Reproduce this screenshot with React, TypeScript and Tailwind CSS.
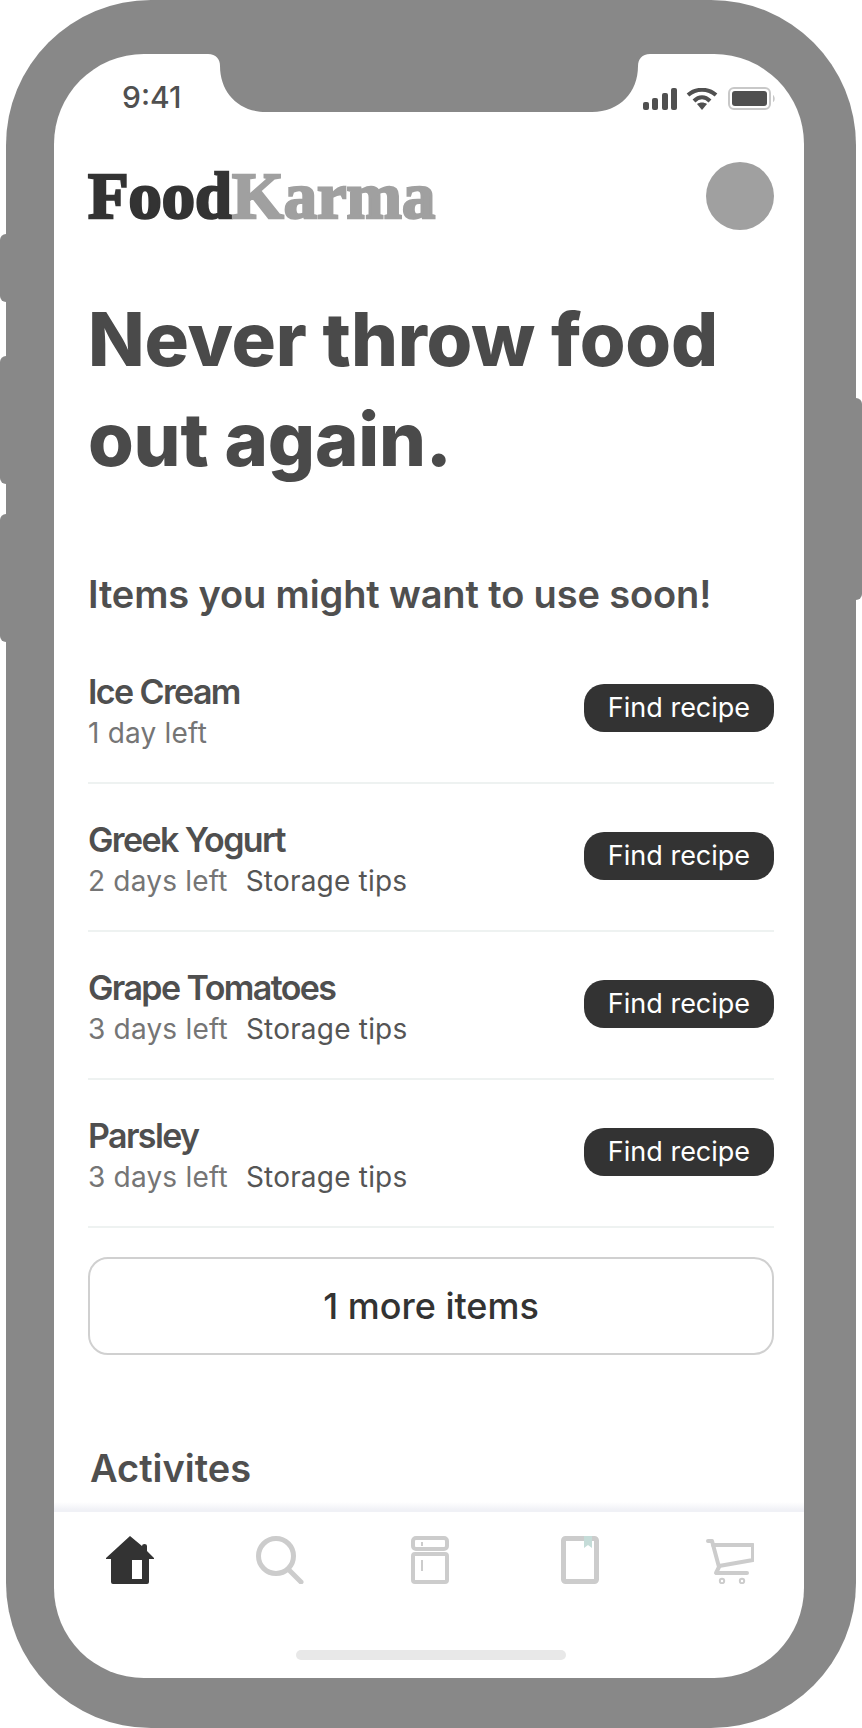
const items = [
  { name: 'Ice Cream', left: '1 day left', tips: false },
  { name: 'Greek Yogurt', left: '2 days left', tips: true },
  { name: 'Grape Tomatoes', left: '3 days left', tips: true },
  { name: 'Parsley', left: '3 days left', tips: true },
];

function Notch() {
  return (
    <svg className="absolute left-[154px] top-0" width="442" height="58" viewBox="0 0 442 58">
      <path d="M0 0 C8 0 12 5 12 12 C12 38 30 58 58 58 H384 C412 58 430 38 430 12 C430 5 434 0 442 0 Z" fill="#888888" />
    </svg>
  );
}

function SignalIcons() {
  return (
    <div className="absolute right-[27px] top-[33px] flex items-center">
      <svg width="36" height="22" viewBox="0 0 36 22" fill="#505050">
        <rect x="1" y="14" width="6" height="8" rx="2" />
        <rect x="10" y="10" width="6" height="12" rx="2" />
        <rect x="20" y="5" width="6" height="17" rx="2" />
        <rect x="29" y="0" width="6" height="22" rx="2" />
      </svg>
      <svg className="ml-[8px]" width="32" height="22" viewBox="0 0 32 22" fill="none">
        <path d="M2 7 C10 0 22 0 30 7" stroke="#505050" strokeWidth="4" />
        <path d="M8 13 C13 8 19 8 24 13" stroke="#505050" strokeWidth="4" />
        <path d="M11 16 L16 22 L21 16 C18 14 14 14 11 16 Z" fill="#505050" />
      </svg>
      <svg className="ml-[10px]" width="49" height="23" viewBox="0 0 49 23" fill="none">
        <rect x="1" y="1" width="41" height="21" rx="5" stroke="#c8c8c8" strokeWidth="2" />
        <rect x="4" y="4" width="35" height="15" rx="3" fill="#505050" />
        <path d="M45 8 C47 9 47.500 14 45 15 Z" fill="#c8c8c8" />
      </svg>
    </div>
  );
}

function HomeIcon() {
  return (
    <svg className="-ml-[2px]" width="48" height="48" viewBox="0 0 48 48">
      <path d="M24 0 L36 10 V10 Q36 8 38.500 8 Q41 8 41 10 V15 L48 22 V23 H43 V46 Q43 48 41 48 H7 Q5 48 5 46 V23 H0 V22 Z" fill="#333333" />
      <rect x="26" y="24" width="10" height="19" fill="#ffffff" />
    </svg>
  );
}

function SearchIcon() {
  return (
    <svg width="48" height="48" viewBox="0 0 48 48" fill="none" stroke="#cccccc" strokeWidth="5" strokeLinecap="round">
      <circle cx="20" cy="20" r="17.500" />
      <path d="M33 34 L45 46" />
    </svg>
  );
}

function FridgeIcon() {
  return (
    <svg width="38" height="48" viewBox="0 0 38 48" fill="none" stroke="#cccccc" strokeWidth="4">
      <rect x="2" y="2" width="34" height="11" rx="3" />
      <path d="M2 20 Q2 18 4 18 H34 Q36 18 36 20 V44 Q36 46 34 46 H4 Q2 46 2 44 Z" />
      <path d="M11 6 V10 M11 24 V35" strokeWidth="2" />
    </svg>
  );
}

function BookIcon() {
  return (
    <svg width="38" height="48" viewBox="0 0 38 48" fill="none">
      <rect x="2.500" y="2.500" width="33" height="43" rx="2" stroke="#cccccc" strokeWidth="5" />
      <path d="M23 0 H31 V12 L27 9 L23 12 Z" fill="#c5dcd8" />
    </svg>
  );
}

function CartIcon() {
  return (
    <svg className="ml-[2px]" width="48" height="48" viewBox="0 0 48 48" fill="none" stroke="#cccccc" strokeLinecap="round" strokeLinejoin="round">
      <path d="M2 5 H6 L13 31 L10 37 H41" strokeWidth="4" />
      <path d="M7 9 H47 V24 L13 30" strokeWidth="4" />
      <circle cx="16" cy="45" r="2.200" strokeWidth="2" />
      <circle cx="36" cy="45" r="2.200" strokeWidth="2" />
    </svg>
  );
}

export default function App() {
  return (
    <div className="w-[862px] h-[1728px] bg-white font-['Inter',sans-serif]">
      <div className="relative mx-[6px] w-[850px] h-[1728px] rounded-[145px] bg-[#888888] pl-[48px] pr-[52px] pt-[54px] pb-[50px]">
        {/* side buttons */}
        <div className="absolute -left-[6px] top-[234px] w-[12px] h-[68px] rounded-l-[6px] bg-[#888888]" />
        <div className="absolute -left-[6px] top-[356px] w-[12px] h-[128px] rounded-l-[6px] bg-[#888888]" />
        <div className="absolute -left-[6px] top-[514px] w-[12px] h-[128px] rounded-l-[6px] bg-[#888888]" />
        <div className="absolute -right-[6px] top-[398px] w-[12px] h-[202px] rounded-r-[6px] bg-[#888888]" />

        <div className="relative flex flex-col h-full rounded-[90px] bg-white overflow-hidden">
          <Notch />
          <div className="absolute left-[68px] top-[23px] text-[30px] leading-[40px] font-medium text-[#505050]">9:41</div>
          <SignalIcons />

          <main className="flex-1 overflow-hidden pr-[30px] pl-[34px] pt-[108px]">
            <div className="flex items-center justify-between">
              <div className="font-['Liberation_Serif',serif] text-[66.500px] leading-[68px] font-bold [-webkit-text-stroke:2.500px_currentColor]">
                <span className="text-[#333333]">Food</span>
                <span className="text-[#a0a0a0]">Karma</span>
              </div>
              <div className="w-[68px] h-[68px] rounded-full bg-[#a0a0a0]" />
            </div>

            <h1 className="mt-[59px] text-[74px] leading-[100px] font-extrabold tracking-[-0.200px] text-[#4a4a4a]">
              Never throw food out again.
            </h1>

            <h2 className="mt-[80px] text-[38px] leading-[50px] font-semibold tracking-[-0.130px] text-[#4f4f4f]">
              Items you might want to use soon!
            </h2>

            <ul className="mt-[17px]">
              {items.map((item) => (
                <li key={item.name} className="flex items-center justify-between h-[148px] border-b-2 border-[#eef2f1]">
                  <div className="pt-[3px]">
                    <div className="text-[34px] leading-[44px] font-semibold tracking-[-1.600px] text-[#4f4f4f]">{item.name}</div>
                    <div className="flex gap-[18px] text-[28px] leading-[38px] tracking-[0.200px]">
                      <span className="text-[#757575]">{item.left}</span>
                      {item.tips && <span className="text-[#555555]">Storage tips</span>}
                    </div>
                  </div>
                  <button className="mb-[2px] w-[190px] h-[48px] rounded-[20px] bg-[#333333] text-[27px] text-white">Find recipe</button>
                </li>
              ))}
            </ul>

            <button className="mt-[29px] w-full h-[98px] rounded-[20px] border-2 border-[#d0d0d0] text-[36px] font-medium text-[#333333]">
              1 more items
            </button>

            <h2 className="mt-[88px] ml-[2px] text-[38px] leading-[50px] font-semibold text-[#4f4f4f]">Activites</h2>
          </main>

          {/* tab bar */}
          <nav className="relative h-[168px] shrink-0 border-t-2 border-[#f0f1f6]">
            <div className="absolute -top-[10px] left-0 right-0 h-[8px] bg-gradient-to-b from-transparent to-[#f0f1f6]" />
            <div className="grid grid-cols-5 justify-items-center pl-[2px] pt-[24px]">
              <HomeIcon />
              <SearchIcon />
              <FridgeIcon />
              <BookIcon />
              <CartIcon />
            </div>
            <div className="ml-[242px] mt-[66px] w-[270px] h-[10px] rounded-full bg-[#e8e8e8]" />
          </nav>
        </div>
      </div>
    </div>
  );
}
